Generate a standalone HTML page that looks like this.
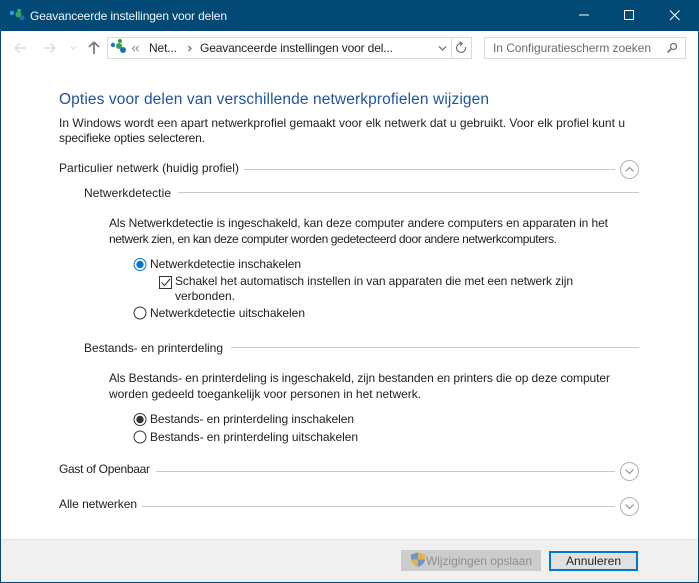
<!DOCTYPE html>
<html><head><meta charset="utf-8"><title>Geavanceerde instellingen voor delen</title>
<style>
html,body{margin:0;padding:0;background:#fff;width:699px;height:583px;overflow:hidden}
svg{display:block}
text{font-family:"Liberation Sans",sans-serif;font-size:12px;fill:#222}
.g{fill:#6d6d6d}
.h{font-size:15.5px;fill:#1f55a0}
.w{fill:#f2f6f9}
.l{stroke:#c8c8c8;stroke-width:1}
</style></head><body>
<svg width="699" height="583" viewBox="0 0 699 583" xmlns="http://www.w3.org/2000/svg">
<rect width="699" height="583" fill="#fff"/>
<!-- title bar -->
<rect width="699" height="31" fill="#024a75"/>
<circle cx="12" cy="13" r="2.200" fill="#2f9be0"/><circle cx="19" cy="10.500" r="1.800" fill="#45b04a"/><circle cx="18.500" cy="14.500" r="3" fill="#3aa350"/><circle cx="22" cy="18" r="2.500" fill="#1d6fb8"/>
<text class="w" x="30" y="20" textLength="197" lengthAdjust="spacing">Geavanceerde instellingen voor delen</text>
<rect x="579" y="14.500" width="10" height="1" fill="#fff"/>
<rect x="624.500" y="10.500" width="9" height="9" fill="none" stroke="#fff"/>
<path d="M670 10.500l9.500 9.500M679.500 10.500l-9.500 9.500" stroke="#fff" stroke-width="1" fill="none"/>
<!-- nav -->
<path d="M15 48h11M15 48l4.500-4.500M15 48l4.500 4.500" stroke="#dcdcdc" stroke-width="1.500" fill="none"/>
<path d="M55 48h-11M55 48l-4.500-4.500M55 48l-4.500 4.500" stroke="#dcdcdc" stroke-width="1.500" fill="none"/>
<path d="M71 46.500l2.500 2.500 2.500-2.500" stroke="#dcdcdc" stroke-width="1.200" fill="none"/>
<path d="M94 54v-11M94 42l-5 5M94 42l5 5" stroke="#7d7d7d" stroke-width="1.800" fill="none"/>
<!-- address -->
<rect x="107.500" y="37.500" width="364" height="21" fill="#fff" stroke="#d9d9d9"/>
<line x1="451.500" y1="38" x2="451.500" y2="58" stroke="#e2e2e2"/>
<circle cx="113" cy="45" r="2.200" fill="#1d78c2"/><circle cx="120" cy="41" r="2" fill="#2f9f46"/><circle cx="119" cy="46" r="3" fill="#36a24a"/><circle cx="123" cy="50" r="3" fill="#1d6fb8"/>
<path d="M135 46l-2.500 2.500 2.500 2.500M138.500 46l-2.500 2.500 2.500 2.500" stroke="#8a8a8a" fill="none"/>
<text x="149" y="52" textLength="28" lengthAdjust="spacing">Net...</text>
<path d="M188.500 46l2.500 2.500-2.500 2.500" stroke="#777" stroke-width="1.300" fill="none"/>
<text x="200" y="52" textLength="193" lengthAdjust="spacing">Geavanceerde instellingen voor del...</text>
<path d="M439 46.500l3.500 3.500 3.500-3.500" stroke="#777" stroke-width="1.300" fill="none"/>
<path d="M465.500 47a4.500 4.500 0 1 1-3.500-3.500M459.500 41.500l2.700 2-2 2.300" stroke="#777" stroke-width="1.200" fill="none"/>
<!-- search -->
<rect x="484.500" y="37.500" width="201" height="21" fill="#fff" stroke="#d9d9d9"/>
<text class="g" x="493" y="52" textLength="158" lengthAdjust="spacing">In Configuratiescherm zoeken</text>
<circle cx="673.500" cy="46.500" r="3" fill="none" stroke="#777" stroke-width="1.300"/>
<path d="M671 49l-3.500 3.500" stroke="#777" stroke-width="1.800"/>
<!-- body -->
<text class="h" x="59" y="104" textLength="430" lengthAdjust="spacing">Opties voor delen van verschillende netwerkprofielen wijzigen</text>
<text x="59" y="127" textLength="566" lengthAdjust="spacing">In Windows wordt een apart netwerkprofiel gemaakt voor elk netwerk dat u gebruikt. Voor elk profiel kunt u</text>
<text x="59" y="142" textLength="146" lengthAdjust="spacing">specifieke opties selecteren.</text>

<text x="59" y="172" textLength="180" lengthAdjust="spacing">Particulier netwerk (huidig profiel)</text>
<line class="l" x1="244" y1="169.500" x2="615" y2="169.500"/>
<circle cx="629.500" cy="169.500" r="9" fill="#fff" stroke="#b0b0b0"/>
<path d="M625.500 171.500l4-4 4 4" stroke="#8a8a8a" stroke-width="1.100" fill="none"/>

<text x="84" y="197" textLength="87" lengthAdjust="spacing">Netwerkdetectie</text>
<line class="l" x1="178" y1="192.500" x2="639" y2="192.500"/>
<text x="109" y="227" textLength="499" lengthAdjust="spacing">Als Netwerkdetectie is ingeschakeld, kan deze computer andere computers en apparaten in het</text>
<text x="109" y="243" textLength="448" lengthAdjust="spacing">netwerk zien, en kan deze computer worden gedetecteerd door andere netwerkcomputers.</text>

<circle cx="140" cy="264.500" r="6" fill="#fff" stroke="#0078d7"/><circle cx="140" cy="264.500" r="3.700" fill="#0078d7"/>
<text x="150" y="268" textLength="151" lengthAdjust="spacing">Netwerkdetectie inschakelen</text>
<rect x="159.500" y="276.500" width="12" height="12" fill="#fff" stroke="#333"/>
<path d="M161.500 282.500l3 3 5.500-6.500" stroke="#333" stroke-width="1.100" fill="none"/>
<text x="175" y="285" textLength="398" lengthAdjust="spacing">Schakel het automatisch instellen in van apparaten die met een netwerk zijn</text>
<text x="175" y="300" textLength="60" lengthAdjust="spacing">verbonden.</text>
<circle cx="140" cy="313" r="6" fill="#fff" stroke="#333"/>
<text x="150" y="317" textLength="155" lengthAdjust="spacing">Netwerkdetectie uitschakelen</text>

<text x="84" y="352" textLength="139" lengthAdjust="spacing">Bestands- en printerdeling</text>
<line class="l" x1="231" y1="347.500" x2="639" y2="347.500"/>
<text x="109" y="382" textLength="501" lengthAdjust="spacing">Als Bestands- en printerdeling is ingeschakeld, zijn bestanden en printers die op deze computer</text>
<text x="109" y="398" textLength="312" lengthAdjust="spacing">worden gedeeld toegankelijk voor personen in het netwerk.</text>

<circle cx="140" cy="419.500" r="6" fill="#fff" stroke="#333"/><circle cx="140" cy="419.500" r="3.700" fill="#333"/>
<text x="150" y="423" textLength="204" lengthAdjust="spacing">Bestands- en printerdeling inschakelen</text>
<circle cx="140" cy="437" r="6" fill="#fff" stroke="#333"/>
<text x="150" y="441" textLength="208" lengthAdjust="spacing">Bestands- en printerdeling uitschakelen</text>

<text x="59" y="473" textLength="91" lengthAdjust="spacing">Gast of Openbaar</text>
<line class="l" x1="156" y1="471.500" x2="615" y2="471.500"/>
<circle cx="629.500" cy="471.500" r="9" fill="#fff" stroke="#b0b0b0"/>
<path d="M625.500 469.500l4 4 4-4" stroke="#8a8a8a" stroke-width="1.100" fill="none"/>

<text x="59" y="508" textLength="78" lengthAdjust="spacing">Alle netwerken</text>
<line class="l" x1="142" y1="506.500" x2="615" y2="506.500"/>
<circle cx="629.500" cy="506.500" r="9" fill="#fff" stroke="#b0b0b0"/>
<path d="M625.500 504.500l4 4 4-4" stroke="#8a8a8a" stroke-width="1.100" fill="none"/>

<!-- footer -->
<rect x="0" y="539" width="699" height="44" fill="#f0f0f0"/>
<line x1="0" y1="539.500" x2="699" y2="539.500" stroke="#e2e2e2"/>
<rect x="401" y="550" width="140" height="21" fill="#cccccc"/>
<path d="M411 554.500l7-2 7 2v5c0 3.500-3.500 6-7 7.500-3.500-1.500-7-4-7-7.500z" fill="#dcb453"/>
<path d="M418 552.500v7h-7v-5zM418 559.500h7c0 3.500-3.500 6-7 7.500z" fill="#6d98c4"/>
<text x="426" y="565" textLength="106" lengthAdjust="spacing" style="fill:#8f8f8f">Wijzigingen opslaan</text>
<rect x="550" y="552" width="87" height="18" fill="#e1e1e1" stroke="#0078d7" stroke-width="2"/>
<text x="566" y="565" textLength="55" lengthAdjust="spacing">Annuleren</text>

<!-- window border -->
<rect x="0" y="0" width="1" height="583" fill="#024a75"/>
<rect x="698" y="0" width="1" height="583" fill="#024a75"/>
<rect x="0" y="582" width="699" height="1" fill="#024a75"/>
</svg>
</body></html>
